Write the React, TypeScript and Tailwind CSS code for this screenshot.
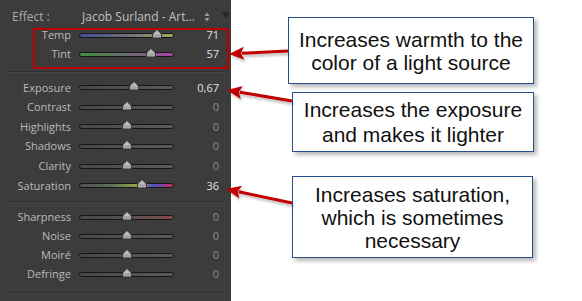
import React from "react";

type Row = {
  label: string;
  value: string;
  pos: number;
  track: string;
  bright?: boolean;
};

const plain = "bg-linear-to-r from-[#484848] to-[#5a5a5a]";

const groupOne: Row[] = [
  { label: "Temp", value: "71", pos: 82, track: "bg-linear-to-r from-[#4a4a98] via-[#6e6e78] to-[#a4a456]", bright: true },
  { label: "Tint", value: "57", pos: 76, track: "bg-linear-to-r from-[#3e8e3e] via-[#6a6a6a] to-[#a044a0]", bright: true },
];

const groupTwo: Row[] = [
  { label: "Exposure", value: "0,67", pos: 58, track: plain, bright: true },
  { label: "Contrast", value: "0", pos: 50, track: plain },
  { label: "Highlights", value: "0", pos: 50, track: plain },
  { label: "Shadows", value: "0", pos: 50, track: plain },
  { label: "Clarity", value: "0", pos: 50, track: plain },
  {
    label: "Saturation",
    value: "36",
    pos: 66,
    track: "bg-[linear-gradient(to_right,#505050,#5a7458_35%,#84984c_55%,#a89c46_63%,#4a58b8_78%,#8844a8_88%,#c02a3a)]",
    bright: true,
  },
];

const groupThree: Row[] = [
  { label: "Sharpness", value: "0", pos: 51, track: "bg-linear-to-r from-[#484848] via-[#525050] to-[#844a4a]" },
  { label: "Noise", value: "0", pos: 50, track: plain },
  { label: "Moiré", value: "0", pos: 50, track: plain },
  { label: "Defringe", value: "0", pos: 50, track: plain },
];

function Slider({ pos, track }: { pos: number; track: string }) {
  return (
    <div className="relative w-[95px] h-[5px]">
      <div className={`h-[5px] w-full rounded-full border border-[#161616] ${track}`}></div>
      <svg
        width="10"
        height="10"
        viewBox="0 0 10 10"
        className="absolute top-[-4px] -translate-x-1/2"
        style={{ left: `${pos}%` }}
      >
        <polygon points="5,0.5 9.5,5 9.5,9 0.5,9 0.5,5" fill="#a6a6a6" stroke="#2a2a2a" strokeWidth="0.8" />
        <polygon points="5,1.5 8.5,5 1.5,5" fill="#bdbdbd" />
      </svg>
    </div>
  );
}

function SliderRow({ row, h }: { row: Row; h: string }) {
  return (
    <div className={`flex items-center ${h}`}>
      <div className="w-[71px] text-right text-[#bababa]">{row.label}</div>
      <div className="ml-[8px]">
        <Slider pos={row.pos} track={row.track} />
      </div>
      <div className={`flex-1 text-right pr-[12px] ${row.bright ? "text-[#e2e2e2]" : "text-[#8c8c8c]"}`}>
        {row.value}
      </div>
    </div>
  );
}

function Separator({ h }: { h: string }) {
  return (
    <div className={`flex items-center ${h}`}>
      <div className="mx-[8px] flex-1 border-t border-[#2e2e2e] shadow-[0_1px_0_#454545]"></div>
    </div>
  );
}

function Callout({ lines, cls }: { lines: string[]; cls: string }) {
  return (
    <div
      className={`flex flex-col items-center justify-center border border-[#25508c] bg-white text-center text-[21px] leading-[23px] text-[#111] shadow-[3px_3px_4px_rgba(0,0,0,0.28)] ${cls}`}
    >
      {lines.map((l) => (
        <div key={l}>{l}</div>
      ))}
    </div>
  );
}

function Arrow({ x1, y1, x2, y2 }: { x1: number; y1: number; x2: number; y2: number }) {
  const dx = x2 - x1;
  const dy = y2 - y1;
  const len = Math.sqrt(dx * dx + dy * dy);
  const ux = dx / len;
  const uy = dy / len;
  const hl = 15;
  const hw = 6.5;
  const bx = x2 - ux * hl;
  const by = y2 - uy * hl;
  const pts = `${x2},${y2} ${bx - uy * hw},${by + ux * hw} ${bx + ux * 3},${by + uy * 3} ${bx + uy * hw},${by - ux * hw}`;
  return (
    <g filter="url(#sh)">
      <line x1={x1} y1={y1} x2={bx + ux * 2} y2={by + uy * 2} stroke="#c00000" strokeWidth="3" />
      <polygon points={pts} fill="#c00000" />
    </g>
  );
}

export default function App() {
  return (
    <div
      className="relative flex h-[301px] w-[582px] overflow-hidden bg-white"
      style={{ fontFamily: "'Liberation Sans', Arial, sans-serif" }}
    >
      <div className="flex h-full w-[231px] shrink-0 flex-col bg-[#3c3c3c] text-[11px] font-['Open_Sans',sans-serif]">
        <div className="mt-[8px] flex h-[18px] items-center text-[12px]">
          <div className="w-[82px] pl-[12px] text-[#ababab]">Effect :</div>
          <div className="text-[#c2c2c2]">Jacob Surland - Art...</div>
          <svg width="6" height="10" viewBox="0 0 6 10" className="ml-[9px]">
            <polygon points="3,0.5 5.5,4 0.5,4" fill="#9a9a9a" />
            <polygon points="3,9.5 5.5,6 0.5,6" fill="#9a9a9a" />
          </svg>
          <svg width="8" height="7" viewBox="0 0 8 7" className="ml-[12px] mt-[-4px]">
            <polygon points="0,0 8,0 4,7" fill="#262626" />
          </svg>
        </div>

        {groupOne.map((r) => (
          <SliderRow key={r.label} row={r} h="h-[19px]" />
        ))}
        <Separator h="h-[14px]" />
        {groupTwo.map((r) => (
          <SliderRow key={r.label} row={r} h="h-[19.6px]" />
        ))}
        <Separator h="h-[12.4px]" />
        {groupThree.map((r) => (
          <SliderRow key={r.label} row={r} h="h-[19px]" />
        ))}
        <Separator h="h-[17px]" />
      </div>

      <div className="flex flex-1 flex-col">
        <Callout
          cls="ml-[57px] mt-[17px] h-[67px] w-[246px]"
          lines={["Increases warmth to the", "color of a light source"]}
        />
        <Callout
          cls="ml-[61px] mt-[8px] h-[60px] w-[242px] leading-[25px]"
          lines={["Increases the exposure", "and makes it lighter"]}
        />
        <Callout
          cls="ml-[61px] mt-[24px] h-[82px] w-[241px]"
          lines={["Increases saturation,", "which is sometimes", "necessary"]}
        />
      </div>

      <div className="pointer-events-none absolute left-[33px] top-[28px] h-[41px] w-[196px] border-2 border-[#c00000]"></div>

      <svg className="pointer-events-none absolute inset-0" width="582" height="301" viewBox="0 0 582 301">
        <defs>
          <filter id="sh" x="-20%" y="-50%" width="140%" height="200%">
            <feDropShadow dx="1.5" dy="2.5" stdDeviation="1.2" floodColor="#000" floodOpacity="0.25" />
          </filter>
        </defs>
        <Arrow x1={288} y1={51} x2={229} y2={54} />
        <Arrow x1={292} y1={101} x2={227} y2={90} />
        <Arrow x1={292} y1={203} x2={226} y2={189} />
      </svg>
    </div>
  );
}
